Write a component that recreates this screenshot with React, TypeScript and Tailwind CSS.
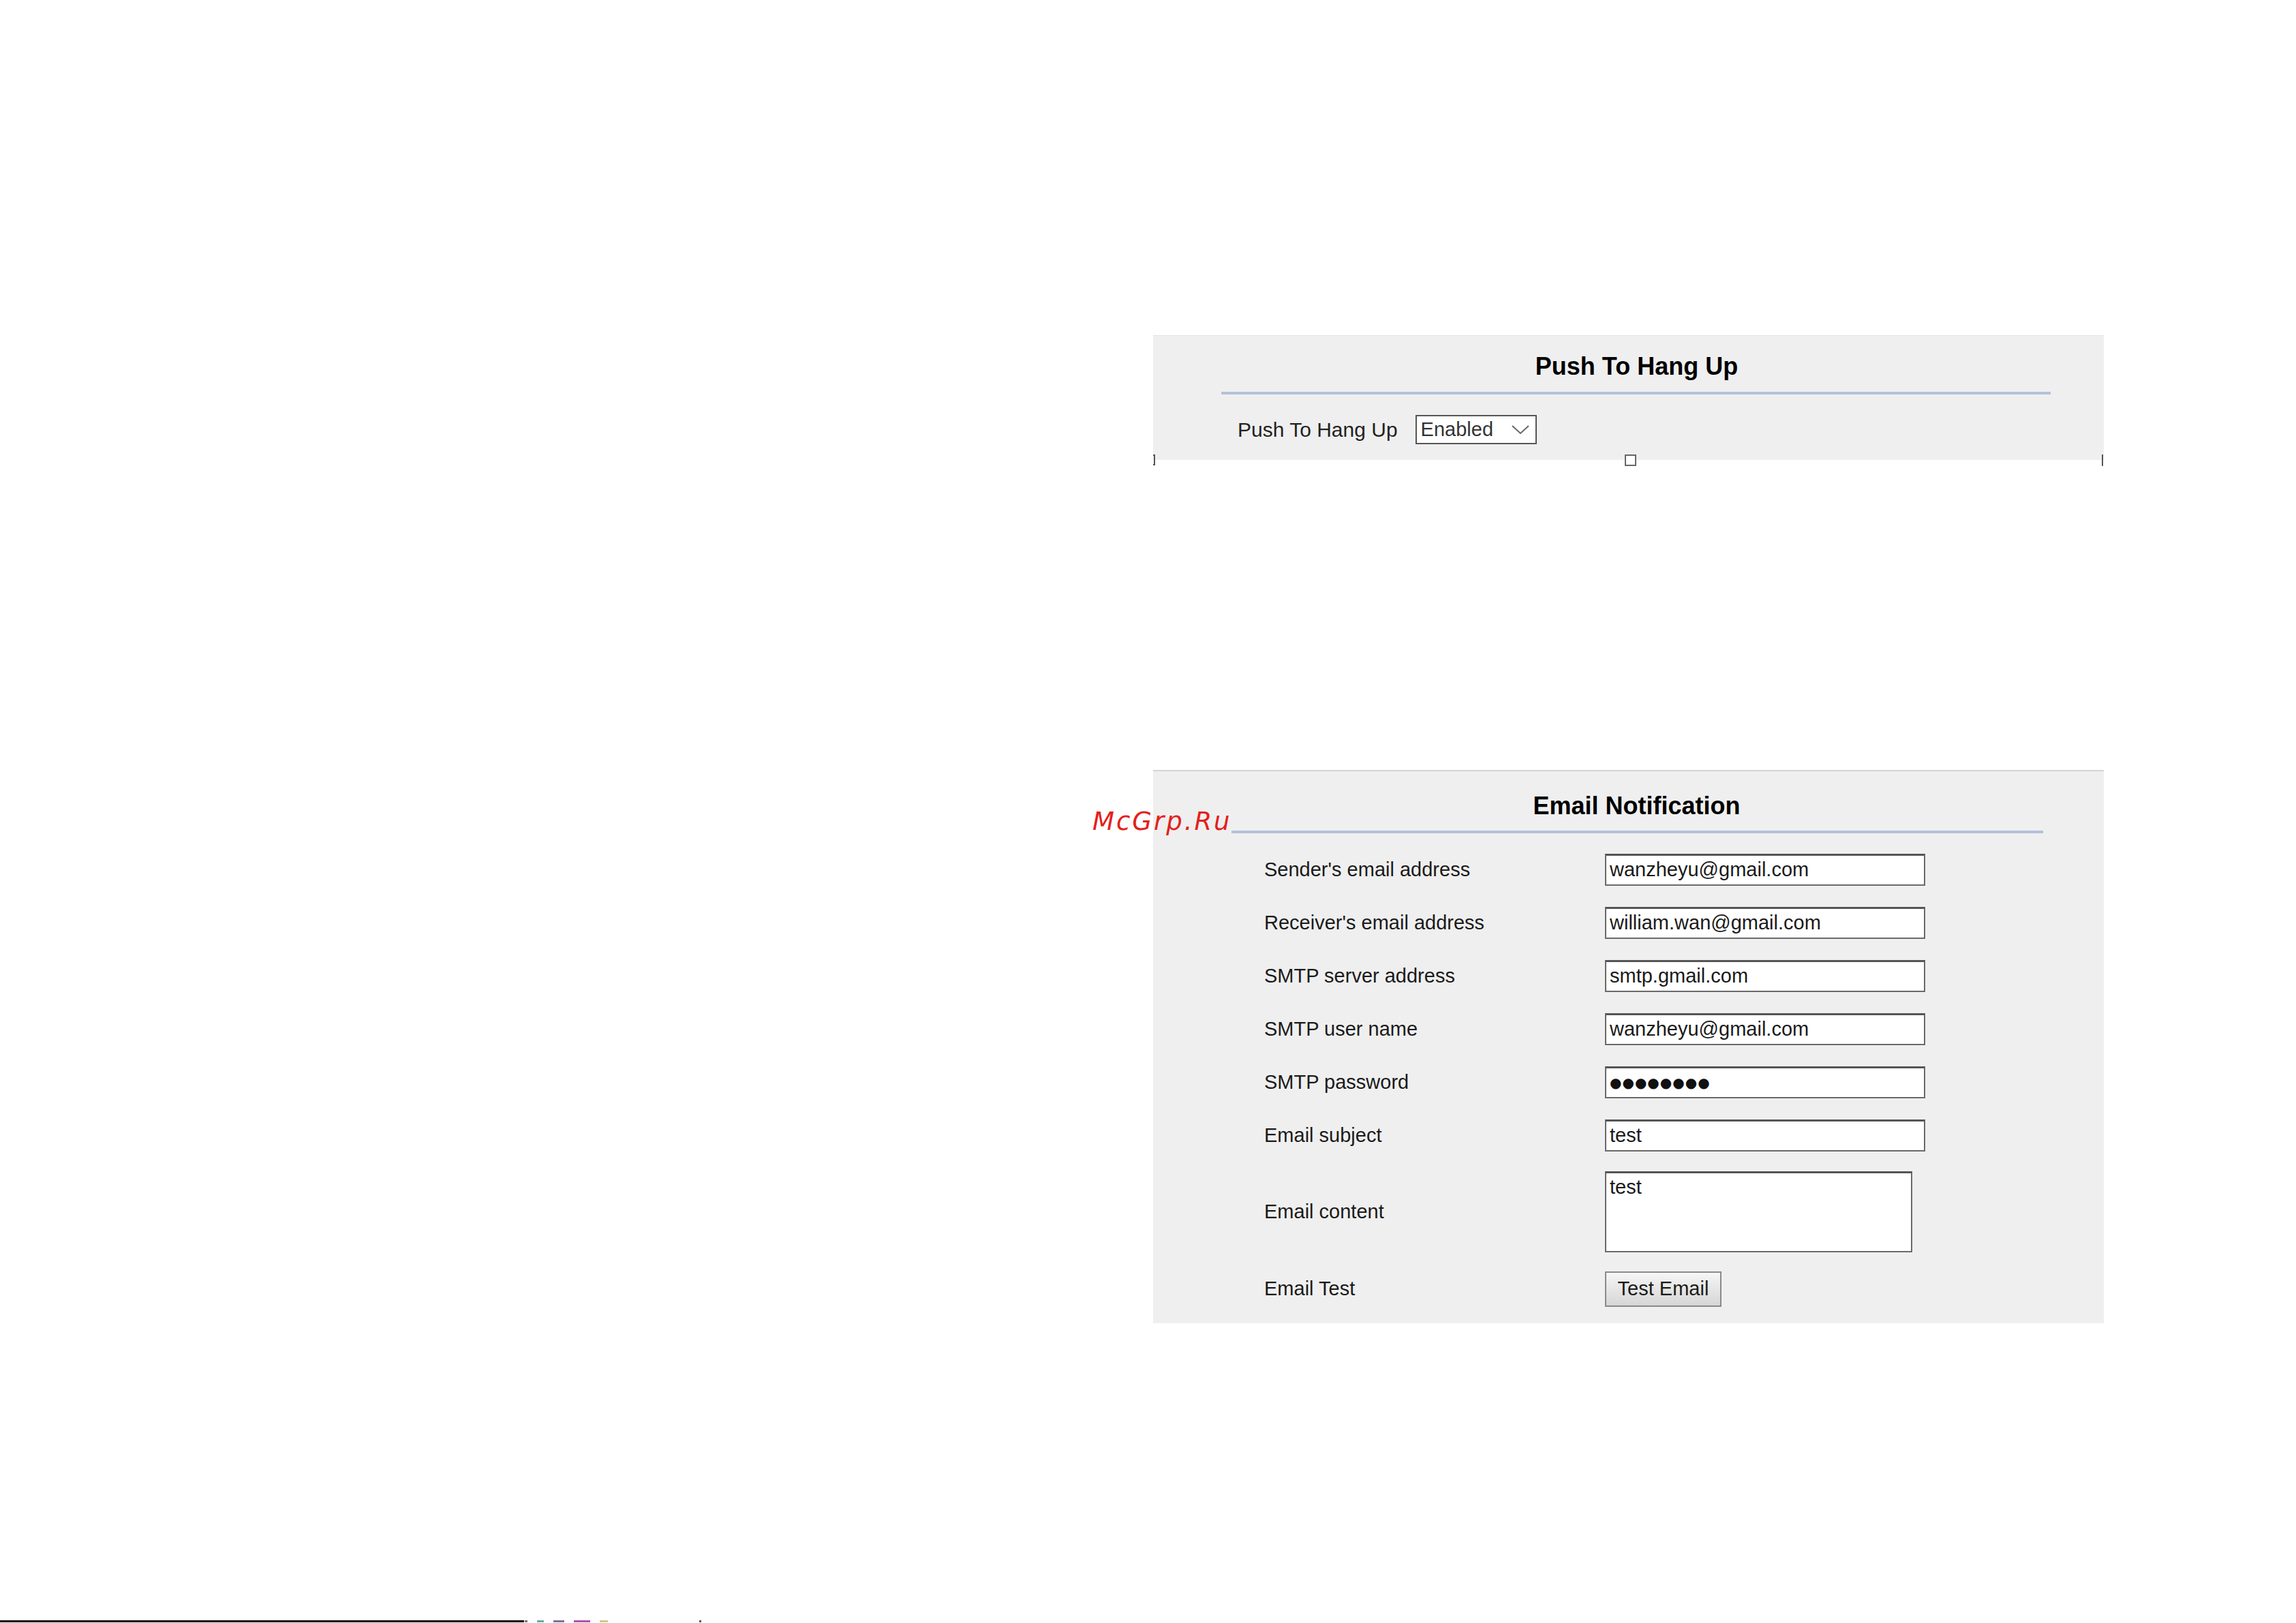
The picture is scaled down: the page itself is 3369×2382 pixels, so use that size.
const fields = [
  { label: "Sender's email address", value: 'wanzheyu@gmail.com' },
  { label: "Receiver's email address", value: 'william.wan@gmail.com' },
  { label: 'SMTP server address', value: 'smtp.gmail.com' },
  { label: 'SMTP user name', value: 'wanzheyu@gmail.com' },
  { label: 'SMTP password', value: '', password: true },
  { label: 'Email subject', value: 'test' },
];

function PushToHangUp() {
  return (
    <div className="relative w-[1395px] bg-[#efefef] border-t border-[#e2e2e2] pt-[22px] pb-[22px]">
      <h2 className="text-center pl-[24px] text-[36px] leading-[46px] font-bold text-black">Push To Hang Up</h2>
      <div className="mt-[14px] ml-[100px] mr-[78px] h-[4px] bg-[#b3c1da]" />
      <div className="mt-[29px] pl-[124px] flex items-center gap-[26px]">
        <span className="text-[30px] text-[#222]">Push To Hang Up</span>
        <div className="w-[178px] h-[43px] border-2 border-[#555] bg-white flex items-center justify-between pl-[6px] pr-[8px]">
          <span className="text-[29px] text-[#333]">Enabled</span>
          <svg width="28" height="15" viewBox="0 0 28 15" fill="none" stroke="#666" strokeWidth="2">
            <path d="M2 2l12 11L26 2" />
          </svg>
        </div>
      </div>
      {/* selection handles along the bottom edge */}
      <div className="absolute left-0 bottom-[-8px] w-[3px] h-[16px] border-r-2 border-y-2 border-[#555]" />
      <div className="absolute left-[692px] bottom-[-9px] w-[17px] h-[17px] border-2 border-[#666] bg-white" />
      <div className="absolute right-[1px] bottom-[-9px] w-[2px] h-[17px] bg-[#555]" />
    </div>
  );
}

function EmailNotification() {
  return (
    <div className="relative w-[1395px] bg-[#efefef] border-t-2 border-[#d4d4d4] pt-[28px] pb-[24px]">
      <h2 className="text-center pl-[24px] text-[36px] leading-[46px] font-bold text-black">Email Notification</h2>
      <div className="mt-[13px] ml-[115px] mr-[89px] h-[4px] bg-[#b3c1da]" />
      <span className="absolute left-[-89px] top-[46px] text-[37px] italic tracking-[3px] text-[#e3201b] font-['DejaVu_Sans',sans-serif] font-light">
        McGrp.Ru
      </span>
      <div className="mt-[30px] pl-[163px] grid grid-cols-[500px_auto] items-center gap-y-[31px]">
        {fields.map((f) => (
          <div key={f.label} className="contents">
            <span className="text-[29px] text-[#1a1a1a]">{f.label}</span>
            <div className="w-[470px] h-[47px] border-2 border-[#6a6a6a] border-t-[3px] border-t-[#555] bg-white flex items-center pl-[5px]">
              {f.password ? (
                <span className="text-[20px] text-[#111] font-['DejaVu_Sans',sans-serif] tracking-[1px]">●●●●●●●●</span>
              ) : (
                <span className="text-[29px] text-[#1a1a1a]">{f.value}</span>
              )}
            </div>
          </div>
        ))}
        <span className="text-[29px] text-[#1a1a1a] mt-[-2px]">Email content</span>
        <div className="mt-[-2px] w-[451px] h-[119px] border-2 border-[#6a6a6a] border-t-[3px] border-t-[#555] bg-white pl-[5px] pt-[2px]">
          <span className="text-[29px] text-[#1a1a1a] leading-[36px]">test</span>
        </div>
        <span className="text-[29px] text-[#1a1a1a] mt-[-3px]">Email Test</span>
        <div className="mt-[-3px]">
          <button className="w-[171px] h-[52px] border-2 border-[#8a8a8a] bg-gradient-to-b from-[#f6f6f6] to-[#d6d6d6] text-[29px] text-[#1a1a1a]">
            Test Email
          </button>
        </div>
      </div>
    </div>
  );
}

export default function App() {
  return (
    <div className="relative w-[3369px] h-[2382px] bg-white overflow-hidden font-['Liberation_Sans',Arial,sans-serif]">
      <div className="pt-[492px] pl-[1692px] flex flex-col gap-[455px]">
        <PushToHangUp />
        <EmailNotification />
      </div>
      {/* cut-off rule at the bottom edge of the page */}
      <div className="absolute left-0 bottom-[1px] w-[769px] h-[3px] bg-black" />
      <div className="absolute left-[770px] bottom-[1px] flex gap-[14px] items-end">
        <span className="w-[4px] h-[3px] bg-[#777]" />
        <span className="w-[10px] h-[3px] bg-[#6aa]" />
        <span className="w-[16px] h-[3px] bg-[#779]" />
        <span className="w-[24px] h-[3px] bg-[#a5a]" />
        <span className="w-[12px] h-[3px] bg-[#cc8]" />
        <span className="w-[3px] h-[3px] bg-[#555] ml-[120px]" />
      </div>
    </div>
  );
}
